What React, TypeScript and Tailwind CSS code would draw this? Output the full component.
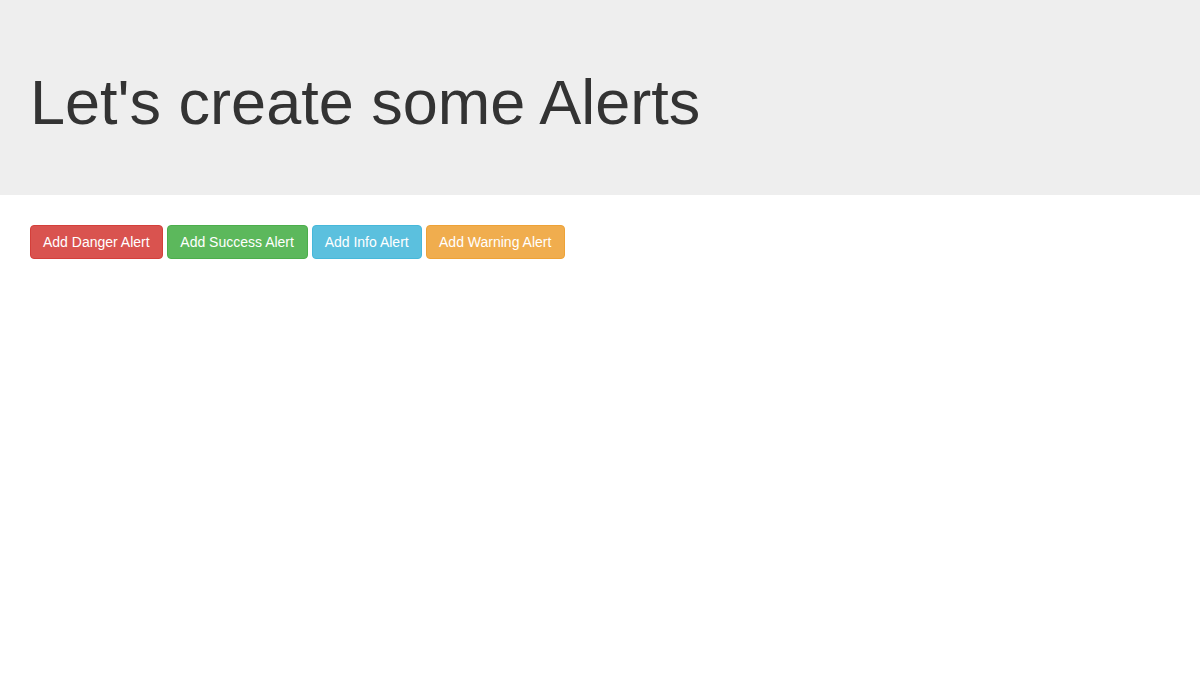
const buttons = [
  { label: "Add Danger Alert", cls: "bg-[#d9534f] border-[#d43f3a]" },
  { label: "Add Success Alert", cls: "bg-[#5cb85c] border-[#4cae4c] w-[141px]" },
  { label: "Add Info Alert", cls: "bg-[#5bc0de] border-[#46b8da]" },
  { label: "Add Warning Alert", cls: "bg-[#f0ad4e] border-[#eea236] w-[139px]" },
];

export default function App() {
  return (
    <div className="min-h-screen bg-white text-[#333] font-['Liberation_Sans',Arial,sans-serif]">
      <div className="bg-[#eeeeee] px-[30px] py-[48px]">
        <h1 className="mt-[20px] mb-[10px] text-[63px] leading-[1.1] font-normal">
          Let's create some Alerts
        </h1>
      </div>
      <div className="px-[30px] pt-[30px] flex gap-[4px]">
        {buttons.map((b) => (
          <button
            key={b.label}
            className={`${b.cls} border border-solid rounded-[4px] px-[12px] py-[6px] text-[14px] leading-[20px] text-white`}
          >
            {b.label}
          </button>
        ))}
      </div>
    </div>
  );
}
